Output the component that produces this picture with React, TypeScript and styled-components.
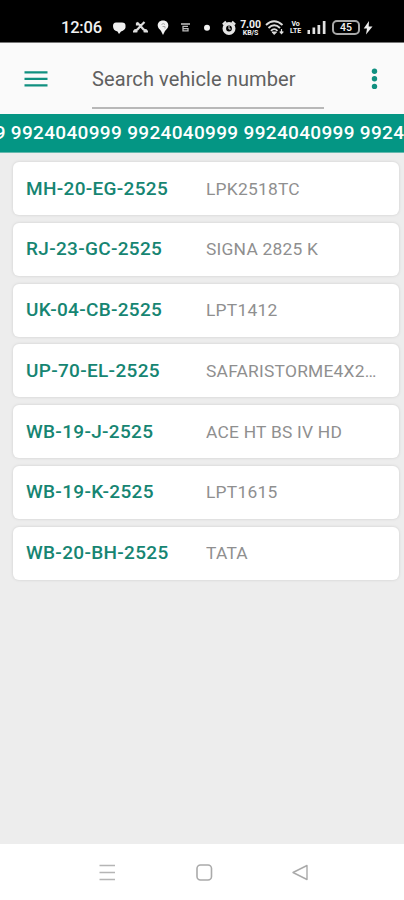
import React from "react";
import styled, { createGlobalStyle } from "styled-components";

const GlobalStyle = createGlobalStyle`
  * { box-sizing: border-box; }
  body { margin: 0; background: #ededed; font-family: Roboto, "Liberation Sans", sans-serif; }
`;

const Screen = styled.div`
  width: 404px;
  height: 900px;
  display: flex;
  flex-direction: column;
  overflow: hidden;
  background: #ededed;
`;

const StatusBar = styled.header`
  flex: none;
  height: 43px;
  padding: 13px 31px 0 61px;
  display: flex;
  align-items: flex-start;
  background: #000;
  border-bottom: 1px solid #777;
  color: #f2f2f2;
`;

const Clock = styled.span`
  width: 51px;
  font-size: 16.5px;
  line-height: 30px;
  font-weight: 500;
  letter-spacing: -0.2px;
`;

const StatusIcon = styled.svg<{ $w: number; $gap?: number }>`
  flex: none;
  width: ${(p) => p.$w}px;
  height: 30px;
  margin-right: ${(p) => p.$gap ?? 0}px;
  display: block;
`;

const Stack = styled.span<{ $w: number; $gap: number }>`
  width: ${(p) => p.$w}px;
  height: 30px;
  margin-right: ${(p) => p.$gap}px;
  display: flex;
  flex: none;
  flex-direction: column;
  align-items: center;
  justify-content: center;
  font-weight: 700;
  white-space: nowrap;
`;

const StackLine = styled.span<{ $size: number; $lh: number }>`
  font-size: ${(p) => p.$size}px;
  line-height: ${(p) => p.$lh}px;
  letter-spacing: -0.1px;
`;

const Battery = styled.span`
  flex: none;
  width: 28px;
  height: 15px;
  margin: 7px 3px 0 0;
  border: 2px solid #a8a8a8;
  border-radius: 5px;
  font-size: 10.5px;
  line-height: 11px;
  font-weight: 500;
  text-align: center;
`;

const AppBar = styled.div`
  flex: none;
  height: 71px;
  display: flex;
  align-items: flex-start;
  background: #fafafa;
`;

const BarButton = styled.button<{ $left: number }>`
  padding: 0;
  border: 0;
  background: none;
  height: 71px;
  margin-left: ${(p) => p.$left}px;
  color: #109080;
  svg { display: block; }
`;

const SearchField = styled.div`
  width: 232px;
  height: 66px;
  margin-left: 44px;
  border-bottom: 2px solid #b8b8b8;
  font-size: 20px;
  line-height: 73px;
  letter-spacing: 0.1px;
  color: #606060;
  white-space: nowrap;
`;

const Ticker = styled.div`
  flex: none;
  height: 39px;
  display: flex;
  justify-content: flex-start;
  overflow: hidden;
  background: #049684;
  border-bottom: 1px solid #65b9ae;
  color: #fff;
  font-size: 19px;
  font-weight: 500;
  letter-spacing: 0.33px;
  line-height: 37px;
  white-space: nowrap;
`;

const TickerText = styled.span`
  margin-left: -105.5px;
`;

const List = styled.main`
  flex: 1;
  padding: 9px 5px 0 13px;
  display: flex;
  flex-direction: column;
  gap: 7.8px;
`;

const Card = styled.article`
  height: 53px;
  flex: none;
  display: flex;
  align-items: center;
  padding: 0 18px 0 13px;
  border-radius: 6px;
  background: #fff;
  box-shadow: 0 0 2px 1px #dedede;
`;

const Plate = styled.span`
  width: 180px;
  flex: none;
  font-size: 19px;
  font-weight: 500;
  letter-spacing: 0.32px;
  line-height: 24px;
  color: #168572;
`;

const Model = styled.span`
  flex: 1;
  min-width: 0;
  overflow: hidden;
  text-overflow: ellipsis;
  white-space: nowrap;
  font-size: 17.4px;
  letter-spacing: 0.23px;
  line-height: 24px;
  color: #8f8f8f;
`;

const NavBar = styled.nav`
  flex: none;
  height: 56px;
  display: flex;
  align-items: center;
  padding-left: 99px;
  gap: 79.5px;
  background: #fff;
  svg { display: block; width: 17px; height: 17px; }
`;

const vehicles = [
  ["MH-20-EG-2525", "LPK2518TC"],
  ["RJ-23-GC-2525", "SIGNA 2825 K"],
  ["UK-04-CB-2525", "LPT1412"],
  ["UP-70-EL-2525", "SAFARISTORME4X2VX"],
  ["WB-19-J-2525", "ACE HT BS IV HD"],
  ["WB-19-K-2525", "LPT1615"],
  ["WB-20-BH-2525", "TATA"],
];

const phone = "9924040999";

export default function App() {
  return (
    <Screen>
      <GlobalStyle />
      <StatusBar>
        <Clock>12:06</Clock>
        <StatusIcon $w={14} $gap={7} viewBox="0 0 14 30">
          <path d="M1 13Q1 9.500 4 9.500H10Q13.500 9.500 13.500 12.500V14.500Q13 17 9 18.500L7 21L5.500 18.500Q1 17.500 1 13Z" fill="#f0f0f0" />
        </StatusIcon>
        <StatusIcon $w={15} $gap={9} viewBox="0 0 15 30" fill="none" stroke="#ddd">
          <path d="M4 9.500L7.500 13L11.500 9M4 9.500V12.500M7.500 13L11 17M7.500 13L4 17" strokeWidth="2.200" />
          <path d="M1.500 19.500Q1.500 17.500 4.500 17.500M13.500 19.500Q13.500 17.500 10.500 17.500" strokeWidth="3.300" />
        </StatusIcon>
        <StatusIcon $w={12} $gap={12} viewBox="0 0 12 30">
          <path d="M6 7.500C2.500 7.500.7 9.800.7 12.500C.7 15 3 16.500 4 18L6 22L8 18C9.500 16.300 11.300 15 11.300 12.500C11.300 9.800 9.500 7.500 6 7.500Z" fill="#f2f2f2" />
          <path d="M8 11.500A2.400 2.400 0 0 0 4.500 11.500M5.500 13.500H8V15.500" fill="none" stroke="#aaa" />
        </StatusIcon>
        <StatusIcon $w={9} $gap={13} viewBox="0 0 9 30" fill="none" stroke="#bbb">
          <path d="M0 11H9" strokeWidth="1.600" />
          <path d="M7 13.300H2V17.900H7V15.600H2" strokeWidth="1.300" />
        </StatusIcon>
        <StatusIcon $w={7} $gap={12} viewBox="0 0 7 30">
          <circle cx="4" cy="14.700" r="3" fill="#f4f4f4" />
        </StatusIcon>
        <StatusIcon $w={14} $gap={4} viewBox="0 0 14 30" fill="none" stroke="#e4e4e4">
          <circle cx="7" cy="15.500" r="4.700" strokeWidth="3.600" />
          <path d="M7 13V16H8.800" strokeWidth="1" />
          <path d="M.8 11.500L4 8.700M13.200 11.500L10 8.700" strokeWidth="2.200" />
        </StatusIcon>
        <Stack $w={21} $gap={4}>
          <StackLine $size={10.5} $lh={11}>7.00</StackLine>
          <StackLine $size={7} $lh={7}>KB/S</StackLine>
        </Stack>
        <StatusIcon $w={20} $gap={6} viewBox="0 0 20 30" fill="none" stroke="#ddd">
          <path d="M1 12Q9 4.500 17.500 12M3.500 15Q9.200 9.500 15 15M6 17.800Q9.200 14.500 12.500 17.800" strokeWidth="1.900" />
          <path d="M7 19H11.500L9.200 21.500Z" fill="#ddd" />
          <path d="M16.500 16V20.500M14.800 18.500L16.500 20.500L18.300 18.500" strokeWidth="1.200" />
        </StatusIcon>
        <Stack $w={9} $gap={7}>
          <StackLine $size={7} $lh={7}>Vo</StackLine>
          <StackLine $size={7} $lh={7}>LTE</StackLine>
        </Stack>
        <StatusIcon $w={20} $gap={5} viewBox="0 0 20 30" fill="#e2e2e2">
          <path d="M.5 17H3V21H.5ZM5.500 14.500H8.200V21H5.500ZM10.500 12H13.200V21H10.500ZM15.800 8H18.500V21H15.800Z" />
        </StatusIcon>
        <Battery>45</Battery>
        <StatusIcon $w={10} viewBox="0 0 10 30">
          <path d="M6 8L.7 15.500H4L3 21.500L9.500 13.500H5.700Z" fill="#eee" />
        </StatusIcon>
      </StatusBar>
      <AppBar>
        <BarButton $left={24} aria-label="Menu">
          <svg width="24" height="71" viewBox="0 0 24 71">
            <path d="M.5 29.300H23.500M.5 35.800H23.500M.5 42.300H23.500" stroke="currentColor" strokeWidth="2.300" />
          </svg>
        </BarButton>
        <SearchField>Search vehicle number</SearchField>
        <BarButton $left={47} aria-label="More options">
          <svg width="8" height="71" viewBox="0 0 8 71" fill="currentColor">
            <circle cx="3.500" cy="28.200" r="2.700" />
            <circle cx="3.500" cy="35.800" r="2.700" />
            <circle cx="3.500" cy="43.400" r="2.700" />
          </svg>
        </BarButton>
      </AppBar>
      <Ticker>
        <TickerText>{Array(5).fill(phone).join(" ")}</TickerText>
      </Ticker>
      <List>
        {vehicles.map(([plate, model]) => (
          <Card key={plate}>
            <Plate>{plate}</Plate>
            <Model>{model}</Model>
          </Card>
        ))}
      </List>
      <NavBar>
        <svg viewBox="0 0 17 17" stroke="#b5b5b5" strokeWidth="1.700">
          <path d="M.5 1.500H16M.5 8.500H16M.5 15.500H16" />
        </svg>
        <svg viewBox="0 0 17 17" fill="none" stroke="#aaa" strokeWidth="1.600">
          <rect x="1" y="1" width="14.500" height="15" rx="3.500" />
        </svg>
        <svg viewBox="0 0 17 17" fill="none" stroke="#aaa" strokeWidth="1.400" strokeLinejoin="round">
          <path d="M15 1.500V15.500L1 8.500Z" />
        </svg>
      </NavBar>
    </Screen>
  );
}
